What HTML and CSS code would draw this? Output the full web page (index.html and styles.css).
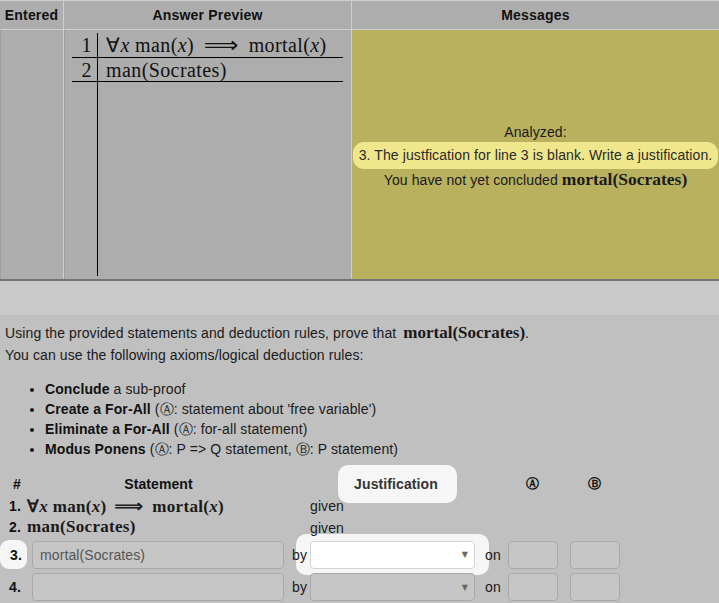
FILE: index.html
```
<!DOCTYPE html>
<html>
<head>
<meta charset="utf-8">
<link rel="stylesheet" href="styles.css">
</head>
<body>
<div class="top">
  <div class="th">Entered</div>
  <div class="th">Answer Preview</div>
  <div class="th">Messages</div>
  <div class="td"></div>
  <div class="td preview">
    <div class="proof">
      <div class="ln">1</div>
      <div class="stmt">∀<i>x</i> man(<i>x</i>)<span class="imp">⟹</span>mortal(<i>x</i>)</div>
      <div class="ln">2</div>
      <div class="stmt">man(Socrates)</div>
      <div class="ln last"></div>
      <div class="stmt last"></div>
    </div>
  </div>
  <div class="td messages">
    <div class="msg">Analyzed:</div>
    <div class="msg"><span class="hl">3. The justfication for line 3 is blank. Write a justification.</span></div>
    <div class="msg">You have not yet concluded <span class="mb mb-msg">mortal(Socrates)</span></div>
  </div>
</div>
<div class="strip"></div>
<div class="content">
  <p class="intro">Using the provided statements and deduction rules, prove that <span class="mb">mortal(Socrates)</span>.</p>
  <p class="intro">You can use the following axioms/logical deduction rules:</p>
  <ul class="rules">
    <li><b>Conclude</b> a sub-proof</li>
    <li><b>Create a For-All</b> (Ⓐ: statement about 'free variable')</li>
    <li><b>Eliminate a For-All</b> (Ⓐ: for-all statement)</li>
    <li><b>Modus Ponens</b> (Ⓐ: P =&gt; Q statement, Ⓑ: P statement)</li>
  </ul>
  <div class="steps">
    <div class="h num-h">#</div>
    <div class="h center">Statement</div>
    <div></div>
    <div class="h center"><span class="just">Justification</span></div>
    <div></div>
    <div class="h circ">Ⓐ</div>
    <div class="h circ">Ⓑ</div>

    <div class="num">1.</div>
    <div class="mb mb-row">∀<i>x</i> man(<i>x</i>)<span class="imp">⟹</span>mortal(<i>x</i>)</div>
    <div></div>
    <div class="given">given</div>
    <div></div><div></div><div></div>

    <div class="num">2.</div>
    <div class="mb mb-row">man(Socrates)</div>
    <div></div>
    <div class="given">given</div>
    <div></div><div></div><div></div>

    <div class="num"><span class="num-hl">3.</span></div>
    <div><div class="field stmt-in">mortal(Socrates)</div></div>
    <div class="by">by</div>
    <div class="sel-cell hl-sel"><div class="field sel white"><span class="arrow">▼</span></div></div>
    <div class="on">on</div>
    <div><div class="field ab"></div></div>
    <div><div class="field ab"></div></div>

    <div class="num">4.</div>
    <div><div class="field stmt-in"></div></div>
    <div class="by">by</div>
    <div class="sel-cell"><div class="field sel"><span class="arrow">▼</span></div></div>
    <div class="on">on</div>
    <div><div class="field ab"></div></div>
    <div><div class="field ab"></div></div>
  </div>
</div>
</body>
</html>
```
FILE: styles.css
```
html, body {
  margin: 0;
  padding: 0;
  background: #c0c0c0;
  font-family: "Liberation Sans", Arial, sans-serif;
  font-size: 14px;
  letter-spacing: 0.1px;
  color: #1a1a1a;
}

.top {
  display: grid;
  grid-template-columns: 63px 287px 1fr;
  grid-template-rows: 28px 249px;
  gap: 1px;
  padding-top: 1px;
  background: #d0d0d0;
  border-bottom: 2px solid #747474;
}

.th {
  background: #adadad;
  font-weight: bold;
  color: #111;
  display: flex;
  align-items: center;
  justify-content: center;
  letter-spacing: 0.2px;
}

.td {
  background: #adadad;
  box-shadow: inset 1px 0 0 #9c9c9c;
}

.preview {
  padding: 3px 8px 3px 8px;
}

.proof {
  display: grid;
  grid-template-columns: 26px 1fr;
  grid-template-rows: 25px 24px 1fr;
  height: 243px;
  font-family: "Liberation Serif", "Times New Roman", serif;
  font-size: 20px;
  letter-spacing: 0.4px;
  color: #111;
}

.ln {
  border-right: 1.5px solid #000;
  border-bottom: 1px solid #000;
  text-align: right;
  padding-right: 5px;
  line-height: 24px;
}

.stmt {
  border-bottom: 1px solid #000;
  padding-left: 8px;
  line-height: 24px;
  white-space: nowrap;
}

.ln.last, .stmt.last {
  border-bottom: none;
}

.imp {
  display: inline-block;
  margin: 0 12px;
  font-family: "DejaVu Sans", sans-serif;
  font-size: 1.05em;
  transform: scaleX(1.15);
}

.messages {
  background: #b9b15e;
  box-shadow: none;
  display: flex;
  flex-direction: column;
  align-items: center;
  justify-content: center;
  text-align: center;
  padding-top: 2px;
}

.msg {
  line-height: 20px;
  white-space: nowrap;
}

.hl {
  display: inline-block;
  background: #f0e68c;
  border-radius: 11px;
  padding: 3px 6px;
  line-height: 21px;
  color: #2a2a2a;
}

.mb {
  font-family: "Liberation Serif", "Times New Roman", serif;
  font-weight: bold;
  font-size: 17px;
  letter-spacing: 0;
  white-space: nowrap;
}

.mb-row {
  letter-spacing: 0.3px;
}

.mb-row .imp {
  margin: 0 10px;
}

.mb-msg {
  font-size: 17.5px;
}

.strip {
  height: 34px;
  background: #c9c9c9;
  border-bottom: 1px solid #bcbcbc;
}

.content {
  padding: 6px 5px 0 5px;
}

.intro {
  margin: 0;
  line-height: 22px;
}

.intro .mb {
  margin-left: 3px;
}

.rules {
  margin: 13px 0 14px 0;
  padding-left: 40px;
  line-height: 20px;
}

.rules b {
  color: #111;
}

.steps {
  position: relative;
  z-index: 0;
  display: grid;
  grid-template-columns: 22px 263px 18px 170px 30px 62px 62px;
  grid-template-rows: 22px 21px 22px 33px 32px;
  align-items: center;
}

.h {
  font-weight: bold;
  color: #111;
}

.num-h {
  padding-left: 8px;
}

.center {
  text-align: center;
}

.just {
  position: relative;
  display: inline-block;
  margin-left: 6px;
  color: #333;
}

.just::before {
  content: "";
  position: absolute;
  left: -16px;
  right: -19px;
  top: -11px;
  bottom: -11px;
  background: #f6f6f6;
  border-radius: 10px;
  z-index: -1;
}

.circ {
  width: 50px;
  text-align: center;
  font-size: 13px;
}

.num {
  font-weight: bold;
  padding-left: 4px;
  color: #111;
}

.num-hl {
  display: flex;
  align-items: center;
  margin-left: -9px;
  padding-left: 10px;
  width: 17px;
  height: 29px;
  background: #f6f6f6;
  border-radius: 9px;
}

.given {
  padding-left: 2px;
  align-self: end;
  line-height: 20px;
}

.by {
  padding-left: 2px;
}

.on {
  text-align: center;
}

.field {
  box-sizing: border-box;
  height: 28px;
  border: 1px solid #a9a9a9;
  border-radius: 4px;
  background: #c6c6c6;
}

.stmt-in {
  margin-left: 5px;
  width: 252px;
  padding-left: 7px;
  line-height: 26px;
  color: #555;
}

.sel-cell {
  position: relative;
}

.hl-sel::before {
  content: "";
  position: absolute;
  left: -12px;
  right: -11px;
  top: -7px;
  bottom: -6px;
  background: #f6f6f6;
  border-radius: 10px;
  z-index: -1;
}

.sel {
  margin-left: 2px;
  width: 165px;
  display: flex;
  align-items: center;
  justify-content: flex-end;
  padding-right: 6px;
}

.sel.white {
  background: #fff;
  border-color: #d4d4d4;
}

.arrow {
  font-size: 8px;
  color: #666;
  font-family: "DejaVu Sans", sans-serif;
}

.ab {
  width: 50px;
}
```
